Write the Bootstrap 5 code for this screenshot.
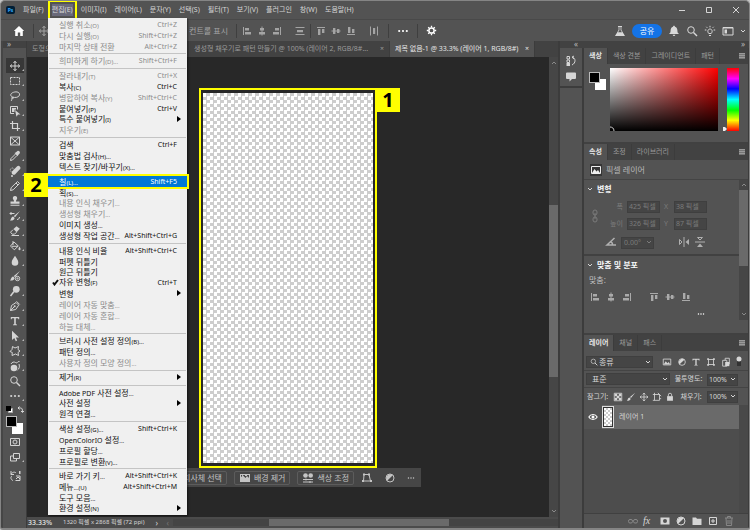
<!DOCTYPE html>
<html lang="ko">
<head>
<meta charset="utf-8">
<meta name="viewport" content="width=device-width, initial-scale=1">
<title>Photoshop</title>
<link href="https://cdn.jsdelivr.net/npm/bootstrap@5.3.0/dist/css/bootstrap.min.css" rel="stylesheet">
<style>
:root{--panel:#535353;--dark:#424242;--line:#3c3c3c;--deep:#282828;--dim:#9a9a9a;--txt:#d6d6d6;--hl:#ffff00}
body{background:#c4c4c4;color:var(--txt);font-family:"Noto Sans","Noto Sans CJK KR",sans-serif;font-size:8px;line-height:12px}
button,input,select{font:inherit;color:inherit;background:none;border:0;padding:0;margin:0;line-height:inherit}
small.lat,.keys{font-size:7px}
svg{display:block;flex:none;width:12px;height:12px;fill:none;stroke:currentColor;stroke-width:1}
.fil{fill:currentColor;stroke:none}
.app{height:100vh;min-height:530px;background:var(--panel);border:1px solid #858585;border-bottom-width:2px;border-radius:5px 5px 3px 3px;overflow:hidden}
.titlebar{height:18px;padding:0 7px 0 5px}
.ps-logo{width:9px;height:8px;font-size:5px;line-height:8px;background:#001e36;color:#31a8ff;border-radius:2px;text-align:center;font-weight:700}
.menus{gap:8px;padding-left:8px;white-space:nowrap;font-size:7px}
.menus button.open{background:#69697a;outline:2px solid var(--hl);outline-offset:2px}
.optbar{height:22px;border-top:1px solid #494949;padding:0 3px 0 12px;color:#a4a4a4}
.showctl{width:178px}
.vsep{width:1px;height:14px;background:#3f3f3f}
.share{background:#1473e6;color:#fff;border-radius:7px;width:30px;height:14px}
.strip{height:7px;background:var(--dark);color:#b5b5b5;font-size:8px;line-height:6px}
.tools{width:26px;border-left:2px solid #464646;border-right:1px solid var(--line)}
.toolbtn{height:15px;width:18px;position:relative;color:#d4d4d4}
.toolbtn.corner::after{content:"";position:absolute;right:0;bottom:2px;border:1px solid #bbb;border-left-color:transparent;border-top-color:transparent}
.toolbtn.on{background:#383838}
.pair{width:17px;height:18px;position:relative}
.pair i{position:absolute;width:11px;height:11px}
.pair .bgc{right:0;bottom:0;background:#fff}
.pair .fgc{left:0;top:0;background:#000;border:1px solid #bbb}
.tabs{height:16px;background:var(--dark);color:var(--dim);white-space:nowrap;font-size:7px}
.tabs button{height:16px;padding:0 5px;border-right:1px solid var(--line)}
.tabs button.on{background:var(--panel);color:#e6e6e6}
.ptabs button.on{font-weight:600}
.stage{background:var(--deep);padding-top:31px;overflow:hidden}
.frame{width:178px;height:380px;border:2px solid var(--hl);padding:3px 2px;position:relative}
.checker{background:repeating-conic-gradient(#cdcdcd 0 25%,#fff 0 50%) 0 0/7px 7px}
.tag{position:absolute;width:24px;height:24px;background:var(--hl);color:#000;font-weight:700;font-size:20px;line-height:24px;text-align:center}
.tag.one{left:175px;top:-2px}
.tag.two{left:-24px;top:155px}
.ctx{width:266px;height:19px;background:#464646;color:#c4c4c4;gap:7px;padding-right:6px}
.ctx .cbtn{height:14px;border:1px solid #5c5c5c;border-radius:2px;padding:0 4px;gap:3px;white-space:nowrap}
.vbar{width:9px;background:#464646;color:#8a8a8a}
.thumb{background:#6a6a6a}
.status{height:11px;background:#4b4b4b;line-height:11px;font-size:8px}
.docinfo{width:93px;font-size:6px;padding-left:4px;white-space:nowrap}
.dock{width:191px;border-left:2px solid var(--line)}
.iconcol{width:24px;border-right:2px solid var(--line)}
.field{background:#454545;border:1px solid #3f3f3f;height:12px}
.xform{display:grid;grid-template-columns:12px 18px 33px 6px 33px;column-gap:4px;row-gap:5px;color:#7b7b7b;font-size:7px;padding:0 0 0 5px;align-items:center}
.xform input{width:100%;padding-left:1px}
.hr2{height:2px;background:#414141}
.spec{background:linear-gradient(to top,#000,transparent),linear-gradient(to right,#fff,#f00)}
.hue{width:12px;background:linear-gradient(#f00,#f0f 17%,#00f 33%,#0ff 50%,#0f0 67%,#ff0 83%,#f00)}
select.field{appearance:none;padding:0 5px;line-height:10px}
.selwrap{position:relative}
.selwrap svg{position:absolute;right:2px;top:3px;width:6px;height:6px}
.layer{background:#6a6a6a;height:24px}
.editmenu{position:absolute;left:47px;top:17px;width:139px;height:497px;background:#f0f0f0;color:#111;padding:1px 0;box-shadow:1px 1px 2px #0008;z-index:5}
.editmenu button{flex:1 1 0;min-height:0;padding:0 10px 0 11px;line-height:11px;text-align:left;white-space:nowrap}
.editmenu small.lat{font-size:6px}
.editmenu button:disabled{color:#8b8b8b}
.editmenu hr{flex:none;height:1px;margin:2px 1px 1px;border:0;background:#c4c4c4;opacity:1}
.editmenu .sub::after{content:"";border:3px solid transparent;border-left:4px solid #000;border-right:0;margin-right:-4px}
.editmenu button.hot{background:#0078d7;color:#fff;outline:2px solid var(--hl);outline-offset:0;position:relative}
.tick{position:absolute;left:4px;width:7px;height:7px;stroke-width:2}
</style>
</head>
<body>
<svg class="d-none" aria-hidden="true">
<symbol id="i-move" viewBox="0 0 12 12"><path d="M6 1.5v9M1.5 6h9M4.5 3 6 1.2 7.5 3M4.5 9 6 10.8 7.5 9M3 4.5 1.2 6 3 7.5M9 4.5 10.8 6 9 7.5"/></symbol>
<symbol id="i-chev" viewBox="0 0 6 6"><path d="m1 2 2 2 2-2"/></symbol>
<symbol id="i-search" viewBox="0 0 12 12"><circle cx="5" cy="5" r="3.3"/><path stroke-width="1.4" d="m7.5 7.5 3.5 3.5"/></symbol>
<symbol id="i-burger" viewBox="0 0 12 12"><path fill="currentColor" stroke="none" d="M3 3h6v6H3z" opacity=".6"/><path d="M3 3.500h6M3 5.500h6M3 7.500h6"/></symbol>
<symbol id="i-dots" viewBox="0 0 12 12"><g fill="currentColor" stroke="none"><circle cx="2.2" cy="6" r="1.1"/><circle cx="6" cy="6" r="1.1"/><circle cx="9.8" cy="6" r="1.1"/></g></symbol>
<symbol id="i-al" viewBox="0 0 12 12"><path d="M2.5 2v8"/><path fill="currentColor" stroke="none" d="M4 3h4v2.400H4zM4 7h6v2.400H4z"/></symbol>
<symbol id="i-ac" viewBox="0 0 12 12"><path d="M6 1.500v9"/><path fill="currentColor" stroke="none" d="M4 3h4v2.400H4zM3 7h6v2.400H3z"/></symbol>
<symbol id="i-ar" viewBox="0 0 12 12"><path d="M9.500 2v8"/><path fill="currentColor" stroke="none" d="M4 3h4v2.400H4zM2 7h6v2.400H2z"/></symbol>
<symbol id="i-at" viewBox="0 0 12 12"><path d="M2 2.500h8"/><path fill="currentColor" stroke="none" d="M3 4h2.400v6H3zM7 4h2.400v4H7z"/></symbol>
<symbol id="i-am" viewBox="0 0 12 12"><path d="M1.500 6h9"/><path fill="currentColor" stroke="none" d="M3 3h2.400v6H3zM7 4h2.400v4H7z"/></symbol>
<symbol id="i-ab" viewBox="0 0 12 12"><path d="M2 9.500h8"/><path fill="currentColor" stroke="none" d="M3 2h2.400v6H3zM7 4h2.400v4H7z"/></symbol>
<symbol id="i-dv" viewBox="0 0 12 12"><path d="M1.500 2.500h9M1.500 9.500h9"/><path fill="currentColor" stroke="none" d="M3 5h6v2.200H3z"/></symbol>
<symbol id="i-dh" viewBox="0 0 12 12"><path d="M2.500 1.500v9M9.500 1.500v9"/><path fill="currentColor" stroke="none" d="M5 3h2.200v6H5z"/></symbol>
<symbol id="i-half" viewBox="0 0 12 12"><circle cx="6" cy="6" r="4"/><path fill="currentColor" stroke="none" d="M8.800 3.200a4 4 0 0 0-5.600 5.600z"/></symbol>
<symbol id="i-pic" viewBox="0 0 12 12"><path d="M1.500 2.500h9v7h-9z"/><path fill="currentColor" stroke="none" d="m2 9 2.500-4 2 2.500L8 6l2 3z"/></symbol>
<symbol id="i-crop" viewBox="0 0 12 12"><path stroke-width="1.200" d="M3.500 1v7.500H11M1 3.500h7.500V11"/></symbol>
<symbol id="i-T" viewBox="0 0 12 12"><path fill="currentColor" stroke="none" d="M1.800 2h8.400v2.300h-.8L9 3.200H6.800v6l1.200.3v.7H4v-.7l1.200-.3v-6H3l-.4 1.100h-.8z"/></symbol>
<symbol id="i-frame" viewBox="0 0 12 12"><path d="M3 3h6v6H3z"/><path fill="currentColor" stroke="none" d="M1.500 1.500h2v2h-2zM8.500 1.500h2v2h-2zM1.500 8.500h2v2h-2zM8.500 8.500h2v2h-2z"/></symbol>
<symbol id="i-brush" viewBox="0 0 12 12"><path fill="currentColor" stroke="none" d="M11 1 6 7.200 4.800 6zM4.200 6.600l1.400 1.400C5.300 10 3 10.800 1 10.500c1.300-1 .9-3.400 3.200-3.900z"/></symbol>
<symbol id="i-lock" viewBox="0 0 12 12"><path d="M4 5.500v-2a2 2 0 0 1 4 0v2"/><path fill="currentColor" stroke="none" d="M2.500 5h7v5.500h-7z"/></symbol>
</svg>

<div class="app d-flex flex-column position-relative">
<header class="titlebar d-flex align-items-center flex-shrink-0">
 <span class="ps-logo">Ps</span>
 <nav class="menus d-flex flex-grow-1" aria-label="메뉴">
  <button>파일(F)</button><button class="open">편집(E)</button><button>이미지(I)</button><button>레이어(L)</button><button>문자(Y)</button><button>선택(S)</button><button>필터(T)</button><button>보기(V)</button><button>플러그인</button><button>창(W)</button><button>도움말(H)</button>
 </nav>
 <div class="d-flex" style="gap:15px">
  <button aria-label="최소화"><svg viewBox="0 0 12 12"><path d="M3 6.500h6"/></svg></button>
  <button aria-label="최대화"><svg viewBox="0 0 12 12"><path d="M3.500 3.500h5v5h-5z"/></svg></button>
  <button aria-label="닫기"><svg viewBox="0 0 12 12"><path d="m3 3 6 6m0-6L3 9"/></svg></button>
 </div>
</header>

<div class="optbar d-flex align-items-center flex-shrink-0">
 <div class="d-flex align-items-center flex-grow-1">
  <button class="text-white" aria-label="홈"><svg viewBox="0 0 12 12"><path class="fil" d="M6 1 .8 6h1.400v5h2.600V7.500h2.400V11h2.600V6h1.400z"/></svg></button>
  <span class="vsep ms-2 me-1"></span><svg><use href="#i-move"/></svg>
  <span class="showctl text-end">변형 컨트롤 표시</span>
  <span class="vsep ms-2 me-1"></span>
  <div class="d-flex" style="gap:3px"><svg><use href="#i-al"/></svg><svg><use href="#i-ac"/></svg><svg><use href="#i-ar"/></svg><svg class="ms-2"><use href="#i-dv"/></svg></div>
  <span class="vsep mx-1"></span>
  <div class="d-flex" style="gap:3px"><svg><use href="#i-at"/></svg><svg><use href="#i-am"/></svg><svg><use href="#i-ab"/></svg><svg class="ms-2"><use href="#i-dh"/></svg></div>
  <span class="vsep mx-2"></span><svg class="text-white"><use href="#i-dots"/></svg><span class="vsep mx-2"></span>
  <svg class="text-white" viewBox="0 0 12 12"><circle cx="5.500" cy="5.500" r="2.600" stroke-width="1.500"/><path stroke-width="1.300" d="M5.500.8v1.700m0 6v1.700M.8 5.500h1.700m6 0h1.700M2.200 2.200l1.200 1.200m4.200 4.200 1.200 1.200m0-6.600L7.600 3.400M3.400 7.600 2.200 8.800"/></svg>
 </div>
 <div class="d-flex align-items-center" style="gap:6px;color:#d8d8d8">
  <svg viewBox="0 0 12 12"><path class="fil" d="M4 1h4v1h-.6v3L11 11H1l3.600-6V2H4z"/><path d="M5.400 2h1.200v3.200l1.400 2H4l1.400-2z" fill="#535353" stroke="none"/></svg>
  <button class="share">공유</button>
  <svg viewBox="0 0 12 12"><path class="fil" d="M6 .8c.7 0 .9.400.9.900C8.800 2.200 9.400 4 9.400 5.500c0 2 .5 2.500 1.600 3.500H1c1.100-1 1.600-1.500 1.600-3.500C2.600 4 3.200 2.200 5.100 1.700c0-.5.200-.9.900-.9zM4.700 9.700h2.600a1.300 1.300 0 0 1-2.600 0z"/></svg>
  <svg><use href="#i-search"/></svg>
  <svg viewBox="0 0 12 12"><path d="M4.800 8.500C3 6.500 4 4 6 4s3 2.500 1.200 4.500zM5 10.500h2M6 .8v1.500M.8 5h1.600M9.600 5h1.600M2.300 1.800l1 1M9.700 1.800l-1 1"/></svg>
  <svg viewBox="0 0 12 12"><path d="M1 2.500h10v7.500H1zM1 3h10"/><path class="fil" d="M2.500 4.500h2.500v4H2.500z"/></svg>
  <svg style="width:6px;height:6px"><use href="#i-chev"/></svg>
 </div>
</div>

<div class="d-flex flex-grow-1" style="min-height:0">
<aside class="tools d-flex flex-column align-items-center flex-shrink-0">
 <div class="strip w-100 flex-shrink-0 ps-1">»</div>
 <div class="flex-shrink-0" style="height:10px"></div>
 <button class="toolbtn corner on" aria-label="이동"><svg class="mx-auto"><use href="#i-move"/></svg></button>
 <button class="toolbtn corner" aria-label="선택 윤곽"><svg class="mx-auto" viewBox="0 0 12 12"><path stroke-dasharray="2 1" d="M1.500 2.500h9v7h-9z"/></svg></button>
 <button class="toolbtn corner" aria-label="올가미"><svg class="mx-auto" viewBox="0 0 12 12"><path d="M3.500 7C1 6 1 3.500 4.500 2.300S11 2.500 10.500 5 6 8 3.500 7zm0 0c-1 .8 0 2 .8 1.300S3.500 6.600 3 8c-.5 1 .3 2-1 3"/></svg></button>
 <button class="toolbtn corner" aria-label="개체 선택"><svg class="mx-auto" viewBox="0 0 12 12"><path d="M1.500 1.500h7v3M1.500 1.500v7H5"/><path class="fil" d="M3 3h4v1.500H5.500V7H3zM6 5l5.500 4.500H9L7.500 11.800z"/></svg></button>
 <button class="toolbtn corner" aria-label="자르기"><svg class="mx-auto"><use href="#i-crop"/></svg></button>
 <button class="toolbtn" aria-label="프레임"><svg class="mx-auto" viewBox="0 0 12 12"><path d="M1.500 2h9v8h-9zM1.500 2l9 8m0-8-9 8"/></svg></button>
 <button class="toolbtn corner" aria-label="스포이드"><svg class="mx-auto" viewBox="0 0 12 12"><path d="M6.500 4 2 8.500 1.500 10.500 3.500 10 8 5.500"/><path class="fil" d="m5.500 3 1.200-.6L8.500.9c1-.8 3.100 1 2.300 2.300L9.300 5l-.7 1.300z"/></svg></button>
 <button class="toolbtn corner" aria-label="복구 브러시"><svg class="mx-auto" viewBox="0 0 12 12"><path class="fil" d="M4.500 5 8.200 1.200a2.100 2.100 0 0 1 2.900 2.900L6 9.500A2.200 2.200 0 0 1 3 6.500z"/><circle cx="3.300" cy="5" r="2" stroke-dasharray="1 1"/><path stroke-width="1.500" d="M2 11h2"/></svg></button>
 <button class="toolbtn corner" aria-label="연필"><svg class="mx-auto" viewBox="0 0 12 12"><path d="m1.500 10.500.7-2.800L8.500 1.500l2 2-6.300 6.300zM7 3l2 2"/></svg></button>
 <button class="toolbtn corner" aria-label="도장"><svg class="mx-auto" viewBox="0 0 12 12"><path class="fil" d="M6 1a2.200 2.200 0 0 1 1.600 3.700c-.6.700-.6 1.300-.6 1.800h3.500v2.300h-9V6.500H5c0-.5 0-1.100-.6-1.800A2.200 2.200 0 0 1 6 1zM1.500 9.700h9v1.100h-9z"/></svg></button>
 <button class="toolbtn corner" aria-label="작업 내역 브러시"><svg class="mx-auto"><use href="#i-brush"/><path d="M1 3.500h4.500M2.500 2 1 3.500 2.500 5M8 9.500c1.500 0 2.500-1 2.500-2.500"/></svg></button>
 <button class="toolbtn corner" aria-label="지우개"><svg class="mx-auto" viewBox="0 0 12 12"><path class="fil" d="m4.500 4 3-2.800 3.300 2.600-3.200 3.400z"/><path d="m4 4.700-2.500 2.500 1.700 2H5.500l2-2M2.500 10.500H10"/></svg></button>
 <button class="toolbtn corner" aria-label="페인트 통"><svg class="mx-auto" viewBox="0 0 12 12"><path d="M5 2 1.500 6l3.800 3.800L9.300 6zM3 6.300h6M4 1v4"/><path class="fil" d="M10.500 6.500c.8 1.500 1.200 2 1 3-.2 1-1.800 1-2 0s.2-1.500 1-3z"/></svg></button>
 <button class="toolbtn corner" aria-label="흐림"><svg class="mx-auto" viewBox="0 0 12 12"><path class="fil" d="M6 .8C7.500 3.500 9.300 5 9.300 7.500a3.300 3.300 0 0 1-6.600 0C2.700 5 4.500 3.500 6 .8z"/></svg></button>
 <button class="toolbtn" aria-label="혼합 브러시"><svg class="mx-auto"><use href="#i-brush"/><circle cx="8.500" cy="8.500" r="2.200"/><circle cx="8.500" cy="8.500" r=".6"/></svg></button>
 <button class="toolbtn corner" aria-label="닷지"><svg class="mx-auto" viewBox="0 0 12 12"><circle class="fil" cx="7.300" cy="4.300" r="3.400"/><path stroke-width="1.500" d="M5 6.500 1.500 11"/></svg></button>
 <button class="toolbtn corner" aria-label="펜"><svg class="mx-auto" viewBox="0 0 12 12"><path d="m1.500 10.500 1-5L7 2.500l2.700 2.700-3 4.300zM1.500 10.500l4-4M7.500 1.300l3.200 3.200"/><circle class="fil" cx="5.700" cy="6.300" r="1"/></svg></button>
 <button class="toolbtn corner" aria-label="문자"><svg class="mx-auto"><use href="#i-T"/></svg></button>
 <button class="toolbtn corner" aria-label="패스 선택"><svg class="mx-auto" viewBox="0 0 12 12"><path class="fil" d="M3 .8 10 7.500H6.800l1.400 3-1.400.7-1.500-3.100L3 10z"/></svg></button>
 <button class="toolbtn corner" aria-label="모양"><svg class="mx-auto" viewBox="0 0 12 12"><path d="M3.500 1.500 6 3l3.500-1.500L9 4.500l2 1.500-2 1.500.5 3L6.500 9 3 10.500l.3-3L1 6.500l2-2z"/></svg></button>
 <button class="toolbtn corner" aria-label="3D 회전"><svg class="mx-auto" viewBox="0 0 12 12"><circle class="fil" cx="5" cy="8" r="3.300"/><path d="M2 4c1-2 3-2.500 4.500-1.500C9 4 8 1 10.500 1.500M10 4c1 3 0 5-1.500 6"/></svg></button>
 <button class="toolbtn" aria-label="돋보기"><svg class="mx-auto"><use href="#i-search"/></svg></button>
 <button class="toolbtn corner" aria-label="더 보기"><svg class="mx-auto"><use href="#i-dots"/></svg></button>
 <div class="d-flex justify-content-between align-items-center" style="width:18px;height:13px"><svg style="width:7px;height:7px" viewBox="0 0 7 7"><path fill="#fff" stroke="#aaa" d="M2.500 2.500h4v4h-4z"/><path fill="#000" stroke="none" d="M0 0h5v5H0z"/></svg><svg style="width:7px;height:7px" viewBox="0 0 7 7"><path d="M1 2h2.500C5 2 5.500 3 5.500 6M2.500.5 1 2l1.500 1.500M4 5l1.500 1.500L7 5"/></svg></div>
 <div class="pair flex-shrink-0"><i class="bgc"></i><i class="fgc"></i></div>
 <button class="toolbtn" aria-label="빠른 마스크"><svg class="mx-auto" viewBox="0 0 12 12"><path d="M1.500 2.500h9v7h-9z"/><circle cx="6" cy="6" r="2"/></svg></button>
 <button class="toolbtn corner" aria-label="화면 모드"><svg class="mx-auto" viewBox="0 0 12 12"><path d="M4.500 2.500h6v5h-6zM4 5H1.500v5h6V8"/></svg></button>
 <button class="toolbtn mt-1" aria-label="생성형"><svg class="mx-auto" viewBox="0 0 12 12"><path d="M2 1v3.500h3M2 4.500C3 2 6 1.500 7 3M7 6h4v4.500H6.500M3 6c-2 1-1 4 1 4.500M7 9l2-2 2 2"/><path class="fil" d="M10 1h1.500v3H10z"/></svg></button>
</aside>

<main class="d-flex flex-column flex-grow-1" style="min-width:0">
 <div class="tabs d-flex align-items-center flex-shrink-0">
  <button class="text-start" style="width:162px">도형으로 패턴 만들기</button>
  <button class="d-flex align-items-center justify-content-between" style="width:201px"><span>생성형 채우기로 패턴 만들기 @ 100% (레이어 2, RGB/8#...</span><span>×</span></button>
  <button class="on d-flex align-items-center justify-content-between" style="width:145px"><span>제목 없음-1 @ 33.3% (레이어 1, RGB/8#)</span><span>×</span></button>
 </div>
 <div class="d-flex flex-grow-1" style="min-height:0">
  <div class="stage d-flex flex-column align-items-center flex-grow-1">
   <div class="frame flex-shrink-0"><div class="checker h-100"></div><span class="tag one">1</span></div>
   <div class="ctx d-flex align-items-center justify-content-end flex-shrink-0">
    <button class="cbtn d-flex align-items-center"><svg viewBox="0 0 12 12"><path stroke-dasharray="2 1" d="M1.500 1.500h9v9h-9z"/></svg>피사체 선택</button>
    <button class="cbtn d-flex align-items-center"><svg viewBox="0 0 12 12"><path class="fil" fill-rule="evenodd" d="M1 2h10v8H1zm1 1v2l2-1.500L6.500 6 8 4l2 2V3H8v1H6V3H4v1H3V3z"/></svg>배경 제거</button>
    <button class="cbtn d-flex align-items-center"><svg viewBox="0 0 12 12"><circle class="fil" cx="3.500" cy="3.500" r="2.300"/><circle class="fil" cx="8.700" cy="3.500" r="2.300"/><path d="M1 7.500h10M1 10h10M4 6.500v2M8 9v2"/></svg>색상 조정</button>
    <button aria-label="변형"><svg viewBox="0 0 12 12"><path d="M3 2.500h5l1.500 6.500h-7z"/><path class="fil" d="M2 1.500h2v2H2zM7 1.500h2v2H7zM1 8h2v2H1zM9 8h2v2H9z"/></svg></button>
    <button class="ms-1" aria-label="조정"><svg><use href="#i-half"/></svg></button>
    <button class="ms-1" aria-label="더 보기"><svg style="width:8px"><use href="#i-dots"/></svg></button>
   </div>
  </div>
  <div class="vbar d-flex flex-column align-items-center flex-shrink-0">
   <svg viewBox="0 0 6 6" style="width:6px;height:12px"><path d="m1 4 2-2 2 2"/></svg>
   <div style="flex:136"></div><div class="thumb w-100" style="flex:173"></div><div style="flex:128"></div>
   <svg style="width:6px;height:12px"><use href="#i-chev"/></svg>
  </div>
 </div>
 <div class="status d-flex align-items-center flex-shrink-0">
  <b class="keys fw-semibold" style="width:32px;padding-left:1px">33.33%</b><span class="docinfo">1320 픽셀 x 2868 픽셀 (72 ppi)</span>
  <span class="text-end" style="width:6px">›</span><span class="text-end" style="width:11px;color:#777">‹</span>
  <div class="d-flex flex-grow-1 ms-1" style="height:7px;background:#444"><div style="flex:94"></div><div class="thumb" style="flex:176"></div><div style="flex:107"></div></div>
 </div>
</main>

<aside class="dock d-flex flex-column flex-shrink-0">
 <div class="strip d-flex justify-content-between flex-shrink-0" style="padding:0 4px 0 14px"><span>«</span><span>»</span></div>
 <div class="d-flex flex-grow-1" style="min-height:0">
 <div class="iconcol flex-shrink-0">
  <div class="d-flex flex-column align-items-center" style="height:40px;gap:4px;padding-top:7px;border-bottom:2px solid var(--line)">
   <svg viewBox="0 0 12 12"><path d="M2 1.500h2.500V4H2zM2 5h2.500v2.500H2zM7 2c4 1 4 6 0 8M9 1 7 2.200 9 4"/><path class="fil" d="M1.500 8h3.500v3H1.500z"/></svg>
   <svg viewBox="0 0 12 12"><path class="fil" d="M2 1.500h8a1 1 0 0 1 1 1V7a1 1 0 0 1-1 1H7L4.500 10.500V8H2a1 1 0 0 1-1-1V2.500a1 1 0 0 1 1-1z"/></svg>
  </div>
 </div>
 <div class="d-flex flex-column flex-grow-1" style="min-width:0;border-right:1px solid var(--line)">
  <div class="tabs ptabs d-flex align-items-center flex-shrink-0"><button class="on">색상</button><button>색상 견본</button><button>그레이디언트</button><button>패턴</button><svg class="ms-auto"><use href="#i-burger"/></svg></div>
  <div class="d-flex flex-shrink-0" style="height:78px;padding:4px 9px 11px 5px">
   <div class="pair mt-1"><i class="bgc"></i><i class="fgc"></i></div>
   <div class="spec flex-grow-1 ms-1 position-relative"><svg class="position-absolute bottom-0 start-0" style="width:5px;height:5px" viewBox="0 0 5 5"><path stroke="#ccc" d="M0 1c2 0 4 1 4 4"/></svg></div>
   <div class="d-flex align-items-end" style="width:9px"><svg class="ms-auto" style="width:4px;height:4px" viewBox="0 0 4 4"><path fill="#eee" stroke="none" d="M0 0h2l2 2-2 2H0z"/></svg></div>
   <div class="hue"></div>
  </div>
  <div class="hr2 flex-shrink-0"></div>
  <div class="tabs ptabs d-flex align-items-center flex-shrink-0"><button class="on">속성</button><button>조정</button><button>라이브러리</button><svg class="ms-auto"><use href="#i-burger"/></svg></div>
  <div class="d-flex align-items-center flex-shrink-0" style="height:20px;padding-left:6px;gap:4px;border-bottom:1px solid #444;color:#b8b8b8"><svg style="background:#363636;color:#eee"><use href="#i-pic"/></svg><span>픽셀 레이어</span></div>
  <div class="d-flex flex-shrink-0">
   <div class="flex-grow-1">
    <div class="d-flex align-items-center" style="height:17px;padding-left:3px;gap:4px"><svg style="width:6px;height:6px"><use href="#i-chev"/></svg><b class="text-light">변형</b></div>
    <div class="xform" style="padding-top:4px">
     <svg style="grid-row:span 2;height:14px" viewBox="0 0 12 14"><rect x="4" y="1" width="4" height="5" rx="2"/><rect x="4" y="8" width="4" height="5" rx="2"/><path d="M6 4v6"/></svg>
     <label class="text-end" for="fw">폭</label><input class="field" id="fw" value="425 픽셀"><label for="fx">X</label><input class="field" id="fx" value="38 픽셀">
     <label class="text-end" for="fh">높이</label><input class="field" id="fh" value="326 픽셀"><label for="fy">Y</label><input class="field" id="fy" value="87 픽셀">
    </div>
    <div class="d-flex align-items-center" style="height:24px;padding-left:21px;color:#b0b0b0"><svg viewBox="0 0 12 12"><path stroke-width="1.500" d="M9.500 2 2 9h9M5.500 6c1.500 0 2 1.500 2 3"/></svg>
     <span class="selwrap ms-1" style="color:#7b7b7b"><select class="field" style="width:33px;padding:0 2px;font-size:7px" aria-label="각도"><option>0.00°</option></select><svg><use href="#i-chev"/></svg></span>
     <svg style="margin-left:24px" viewBox="0 0 12 12"><path d="M6 1v10M1.500 3.500 4 6 1.500 8.500z"/><path class="fil" d="M11 3 7.500 6 11 9z"/></svg><svg class="ms-1" viewBox="0 0 12 12"><path d="M1 6h10M3.500 1.500h5L6 4z"/><path class="fil" d="M3 11 6 7.500 9 11z"/></svg></div>
    <div class="hr2"></div>
    <div class="d-flex align-items-center" style="height:18px;padding-left:3px;gap:4px"><svg style="width:6px;height:6px"><use href="#i-chev"/></svg><b class="text-light">맞춤 및 분포</b></div>
    <div style="padding-left:5px;color:#c0c0c0">맞춤:</div>
    <div class="d-flex" style="height:22px;padding:5px 0 0 5px;gap:4px;color:#aaa"><svg><use href="#i-al"/></svg><svg><use href="#i-ac"/></svg><svg><use href="#i-ar"/></svg><svg style="margin-left:11px"><use href="#i-at"/></svg><svg><use href="#i-am"/></svg><svg><use href="#i-ab"/></svg></div>
    <div class="d-flex justify-content-end text-white" style="padding-right:34px"><svg style="width:8px"><use href="#i-dots"/></svg></div>
   </div>
   <div class="vbar d-flex flex-column align-items-center"><svg viewBox="0 0 6 6" style="width:6px;height:10px"><path d="m1 4 2-2 2 2"/></svg><div class="thumb w-100" style="flex:77"></div><div style="flex:42"></div><svg style="width:6px;height:12px"><use href="#i-chev"/></svg></div>
  </div>
  <div class="flex-shrink-0" style="height:13px"></div>
  <div class="hr2 flex-shrink-0"></div>
  <div class="tabs ptabs d-flex align-items-center flex-shrink-0"><button class="on">레이어</button><button>채널</button><button>패스</button><svg class="ms-auto"><use href="#i-burger"/></svg></div>
  <div class="d-flex align-items-center justify-content-between flex-shrink-0" style="height:20px;padding:2px 6px 0 2px;border-bottom:1px solid #444">
   <span class="selwrap"><select class="field" style="width:67px;padding-left:12px" aria-label="필터"><option>종류</option></select><svg style="left:4px;top:2px;width:8px;height:8px"><use href="#i-search"/></svg><svg><use href="#i-chev"/></svg></span>
   <svg class="ms-1" style="width:10px"><use href="#i-pic"/></svg><svg style="width:10px"><use href="#i-half"/></svg><svg style="width:10px"><use href="#i-T"/></svg><svg style="width:10px"><use href="#i-frame"/></svg><svg style="width:10px" viewBox="0 0 12 12"><path d="M2 4h5v7H2zM5 4V1.500h5v7H7"/><path class="fil" d="M5 6h5v5H5z"/></svg>
   <svg style="width:6px" viewBox="0 0 6 12"><path stroke="#333" stroke-width="4" d="M3 4v6"/><circle class="fil" cx="3" cy="3" r="2.500"/></svg>
  </div>
  <div class="d-flex align-items-center flex-shrink-0" style="height:17px;padding-left:2px;border-bottom:1px solid #444">
   <span class="selwrap"><select class="field" style="width:84px" aria-label="혼합 모드"><option>표준</option></select><svg><use href="#i-chev"/></svg></span>
   <label class="keys flex-grow-1 text-center text-nowrap" for="op">불투명도:</label><span class="selwrap" style="margin-right:10px"><select class="field keys" id="op" style="width:31px;padding:0 1px"><option>100%</option></select><svg><use href="#i-chev"/></svg></span>
  </div>
  <div class="d-flex align-items-center flex-shrink-0" style="height:17px;padding-left:3px">
   <span class="keys text-nowrap">잠그기:</span>
   <div class="d-flex" style="gap:3px;padding-left:5px"><svg style="width:10px" viewBox="0 0 12 12"><path d="M1.500 1.500h9v9h-9z"/><path class="fil" d="M2 2h3v3H2zM7 2h3v3H7zM4.500 4.500h3v3h-3zM2 7h3v3H2zM7 7h3v3H7z"/></svg><svg style="width:10px"><use href="#i-brush"/></svg><svg style="width:10px"><use href="#i-move"/></svg><svg style="width:10px" viewBox="0 0 12 12"><path d="M3 1v9M1 3h8v7H1M7 1l4 4M9 8h2"/></svg><svg style="width:10px"><use href="#i-lock"/></svg></div>
   <label class="keys flex-grow-1 text-center text-nowrap" for="fi">채우기:</label><span class="selwrap" style="margin-right:10px"><select class="field keys" id="fi" style="width:31px;padding:0 1px"><option>100%</option></select><svg><use href="#i-chev"/></svg></span>
  </div>
  <div class="d-flex flex-grow-1" style="background:#4d4d4d">
   <div class="flex-grow-1"><div class="d-flex align-items-center" style="background:var(--panel)"><svg class="text-white" style="width:10px;margin:0 4px" viewBox="0 0 12 12"><path d="M1 6c2-4 8-4 10 0-2 4-8 4-10 0z" stroke-width="1.300"/><circle class="fil" cx="6" cy="6" r="1.800"/></svg>
    <div class="layer flex-grow-1 d-flex align-items-center" style="gap:5px"><div style="width:12px;height:22px;border:1px solid #ddd;padding:1px;background:#333"><div class="h-100" style="background:repeating-conic-gradient(#ccc 0 25%,#fff 0 50%) 0 0/4px 4px"></div></div><span class="keys">레이어 1</span></div></div></div>
   <div style="width:9px;background:#494949"></div>
  </div>
  <div class="d-flex align-items-center justify-content-end flex-shrink-0" style="height:15px;border-top:1px solid #404040;gap:4px;padding-right:13px">
   <svg style="color:#888" viewBox="0 0 12 12"><rect x="1.500" y="4.500" width="4" height="3.500" rx="1.500"/><rect x="6.500" y="4.500" width="4" height="3.500" rx="1.500"/></svg>
   <i style="width:12px;font-family:'Liberation Serif',serif;font-size:10px">fx</i>
   <svg viewBox="0 0 12 12"><path class="fil" fill-rule="evenodd" d="M1.500 2.500h9v7h-9zM6 4a2 2 0 1 0 0 4 2 2 0 0 0 0-4z"/></svg>
   <svg><use href="#i-half"/></svg>
   <svg viewBox="0 0 12 12"><path class="fil" d="M1.500 2.500h3.500l1 1.200h4.500v6.300h-9z"/></svg>
   <svg viewBox="0 0 12 12"><path d="M2.500 2.500h7v7h-7zM6 4v4M4 6h4"/></svg>
   <svg style="color:#888" viewBox="0 0 12 12"><path d="M2 3h8M4.500 3V1.500h3V3M3 3l.5 7.500h5L9 3M5 5v4M7 5v4"/></svg>
  </div>
 </div>
 </div>
</aside>
</div>

<div class="editmenu d-flex flex-column" role="menu">
<button disabled class="d-flex justify-content-between"><span>실행 취소<small class="lat">(O)</small></span><span class="keys">Ctrl+Z</span></button>
<button disabled class="d-flex justify-content-between"><span>다시 실행<small class="lat">(O)</small></span><span class="keys">Shift+Ctrl+Z</span></button>
<button disabled class="d-flex justify-content-between"><span>마지막 상태 전환</span><span class="keys">Alt+Ctrl+Z</span></button>
<hr>
<button disabled class="d-flex justify-content-between"><span>희미하게 하기<small class="lat">(D)...</small></span><span class="keys">Shift+Ctrl+F</span></button>
<hr>
<button disabled class="d-flex justify-content-between"><span>잘라내기<small class="lat">(T)</small></span><span class="keys">Ctrl+X</span></button>
<button class="d-flex justify-content-between"><span>복사<small class="lat">(C)</small></span><span class="keys">Ctrl+C</span></button>
<button disabled class="d-flex justify-content-between"><span>병합하여 복사<small class="lat">(Y)</small></span><span class="keys">Shift+Ctrl+C</span></button>
<button class="d-flex justify-content-between"><span>붙여넣기<small class="lat">(P)</small></span><span class="keys">Ctrl+V</span></button>
<button class="sub d-flex justify-content-between align-items-center"><span>특수 붙여넣기<small class="lat">(I)</small></span></button>
<button disabled>지우기<small class="lat">(E)</small></button>
<hr>
<button class="d-flex justify-content-between"><span>검색</span><span class="keys">Ctrl+F</span></button>
<button>맞춤법 검사<small class="lat">(H)...</small></button>
<button>텍스트 찾기/바꾸기<small class="lat">(X)...</small></button>
<hr>
<button class="hot d-flex justify-content-between"><span>칠<small class="lat">(L)...</small></span><span class="keys">Shift+F5</span></button>
<button>획<small class="lat">(S)...</small></button>
<button disabled>내용 인식 채우기<small class="lat">...</small></button>
<button disabled>생성형 채우기<small class="lat">...</small></button>
<button>이미지 생성<small class="lat">...</small></button>
<button class="d-flex justify-content-between"><span>생성형 작업 공간<small class="lat">...</small></span><span class="keys">Alt+Shift+Ctrl+G</span></button>
<hr>
<button class="d-flex justify-content-between"><span>내용 인식 비율</span><span class="keys">Alt+Shift+Ctrl+C</span></button>
<button>퍼펫 뒤틀기</button>
<button>원근 뒤틀기</button>
<button class="d-flex justify-content-between align-items-center"><svg class="tick" viewBox="0 0 7 7"><path d="m1 3.500 1.500 2L6 1"/></svg><span>자유 변형<small class="lat">(F)</small></span><span class="keys">Ctrl+T</span></button>
<button class="sub d-flex justify-content-between align-items-center"><span>변형</span></button>
<button disabled>레이어 자동 맞춤<small class="lat">...</small></button>
<button disabled>레이어 자동 혼합<small class="lat">...</small></button>
<button disabled>하늘 대체<small class="lat">...</small></button>
<hr>
<button>브러시 사전 설정 정의<small class="lat">(B)...</small></button>
<button>패턴 정의<small class="lat">...</small></button>
<button disabled>사용자 정의 모양 정의<small class="lat">...</small></button>
<hr>
<button class="sub d-flex justify-content-between align-items-center"><span>제거<small class="lat">(R)</small></span></button>
<hr>
<button><span class="keys">Adobe PDF</span> 사전 설정<small class="lat">...</small></button>
<button class="sub d-flex justify-content-between align-items-center"><span>사전 설정</span></button>
<button>원격 연결<small class="lat">...</small></button>
<hr>
<button class="d-flex justify-content-between"><span>색상 설정<small class="lat">(G)...</small></span><span class="keys">Shift+Ctrl+K</span></button>
<button><span class="keys">OpenColorIO</span> 설정<small class="lat">...</small></button>
<button>프로필 할당<small class="lat">...</small></button>
<button>프로필로 변환<small class="lat">(V)...</small></button>
<hr>
<button class="d-flex justify-content-between"><span>바로 가기 키<small class="lat">...</small></span><span class="keys">Alt+Shift+Ctrl+K</span></button>
<button class="d-flex justify-content-between"><span>메뉴<small class="lat">...(U)</small></span><span class="keys">Alt+Shift+Ctrl+M</span></button>
<button>도구 모음<small class="lat">...</small></button>
<button class="sub d-flex justify-content-between align-items-center"><span>환경 설정<small class="lat">(N)</small></span></button>
<span class="tag two">2</span>
</div>
</div>
<script src="https://cdn.jsdelivr.net/npm/bootstrap@5.3.0/dist/js/bootstrap.bundle.min.js"></script>
</body>
</html>
